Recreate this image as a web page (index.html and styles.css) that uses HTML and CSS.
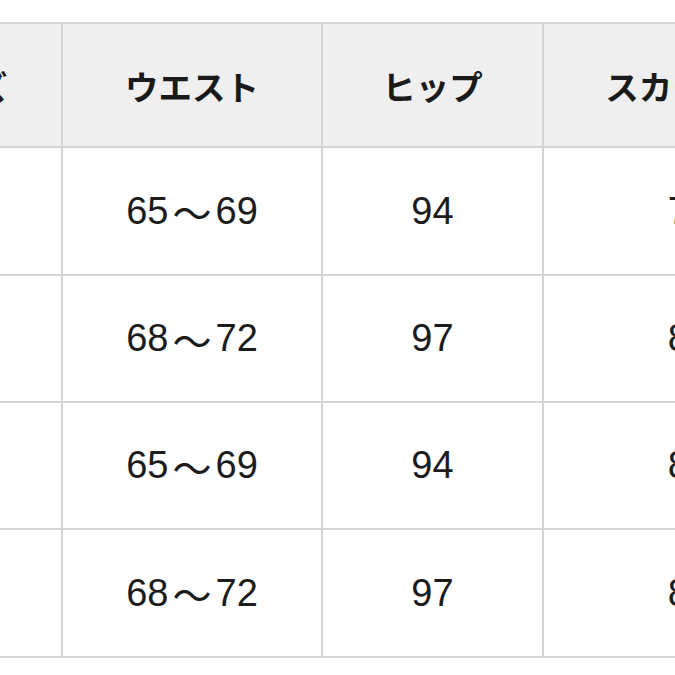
FILE: index.html
```html
<!DOCTYPE html>
<html lang="ja">
<head>
<meta charset="utf-8">
<link rel="stylesheet" href="styles.css">
</head>
<body>
<div class="sheet">
  <div class="size-table">
    <div class="cell head">サイズ</div>
    <div class="cell head">ウエスト</div>
    <div class="cell head">ヒップ</div>
    <div class="cell head">スカート丈</div>

    <div class="cell">S</div>
    <div class="cell">65<span class="tilde">〜</span>69</div>
    <div class="cell">94</div>
    <div class="cell">78</div>

    <div class="cell">M</div>
    <div class="cell">68<span class="tilde">〜</span>72</div>
    <div class="cell">97</div>
    <div class="cell">80</div>

    <div class="cell">S</div>
    <div class="cell">65<span class="tilde">〜</span>69</div>
    <div class="cell">94</div>
    <div class="cell">82</div>

    <div class="cell">M</div>
    <div class="cell">68<span class="tilde">〜</span>72</div>
    <div class="cell">97</div>
    <div class="cell">84</div>
  </div>
</div>
</body>
</html>
```

FILE: styles.css
```css
html, body {
  margin: 0;
  padding: 0;
  background: #ffffff;
  overflow: hidden;
}

.sheet {
  width: 675px;
  height: 675px;
  overflow: hidden;
  padding-top: 22px;
  box-sizing: border-box;
}

.size-table {
  display: grid;
  grid-template-columns: 207px 258px 219px 290px;
  grid-template-rows: 122px 126px 125px 125px 126px;
  gap: 2px;
  padding: 2px;
  background: #d4d4d4;
  margin-left: -148px;
  width: max-content;
}

.cell {
  background: #ffffff;
  display: flex;
  align-items: center;
  justify-content: center;
  font-family: "Liberation Sans", "Noto Sans CJK JP", sans-serif;
  font-size: 38px;
  color: #1c1c1c;
  white-space: nowrap;
}

.cell.head {
  background: #efefef;
  font-family: "Noto Sans CJK JP", sans-serif;
  font-weight: 700;
  font-size: 33.5px;
  color: #1a1a1a;
}

.tilde {
  font-family: "Noto Sans CJK JP", sans-serif;
  font-size: 39px;
  margin: 0 4px;
}
```
